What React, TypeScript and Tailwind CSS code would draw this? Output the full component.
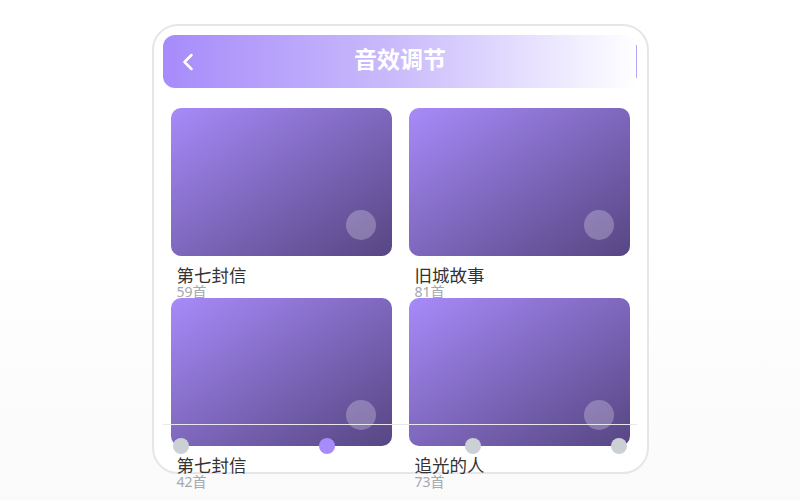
import React from 'react';
import { ChevronLeft } from 'lucide-react';

type Album = { title: string; count: number };

const albums: Album[] = [
  { title: '第七封信', count: 59 },
  { title: '旧城故事', count: 81 },
  { title: '第七封信', count: 42 },
  { title: '追光的人', count: 73 },
];

function AlbumCard({ album }: { album: Album }) {
  return (
    <div className="flex flex-col">
      <div className="relative h-[148px] rounded-[10px] bg-linear-to-br from-[#a78bfa] to-[#574683]">
        <div className="absolute right-4 bottom-4 w-[30px] h-[30px] rounded-full bg-white/25" />
      </div>
      <div className="mt-[9px] px-[6px] text-[17.5px] leading-[20px] text-[#333]">{album.title}</div>
      <div className="px-[6px] text-[14px] leading-[13px] text-[#a3a8b0]">{album.count}首</div>
    </div>
  );
}

export default function App() {
  const stops = [0, 1, 2, 3];
  const active = 1;

  return (
    <div
      className="min-h-screen flex justify-center pt-[24px] bg-linear-to-b from-white from-50% to-[#fafafa]"
      style={{ fontFamily: '"Noto Sans", "Noto Sans CJK SC", sans-serif' }}
    >
      <div className="relative w-[497px] h-[450px] rounded-[26px] border-2 border-[#e6e6ea] bg-white px-[9px] pt-[9px]">
        <div className="flex items-center h-[53px] rounded-[12px] bg-linear-to-r from-[#a78bfa] via-[#cbbcfb] to-white">
          <div className="w-[60px] pl-[11px] flex items-center">
            <ChevronLeft className="w-7 h-7 text-white" strokeWidth={2.2} />
          </div>
          <div className="flex-1 text-center text-white text-[23px] font-bold leading-none pb-[4px]">音效调节</div>
          <div className="w-[60px] flex justify-end pr-[1px]">
            <div className="w-px h-[33px] bg-[#b9a6fb]" />
          </div>
        </div>

        <div className="grid grid-cols-2 gap-x-[17px] px-2 mt-[20px]">
          {albums.map((a, i) => (
            <AlbumCard key={i} album={a} />
          ))}
        </div>

        <div className="absolute left-[9px] right-[10px] top-[398px]">
          <div className="h-px bg-[#e8e8ec]" />
          <div className="flex justify-between px-[10px] mt-[13px]">
            {stops.map((s) => (
              <div
                key={s}
                className={s === active ? 'w-4 h-4 rounded-full bg-[#a78bfa]' : 'w-4 h-4 rounded-full bg-[#cbd0d5]'}
              />
            ))}
          </div>
        </div>
      </div>
    </div>
  );
}
